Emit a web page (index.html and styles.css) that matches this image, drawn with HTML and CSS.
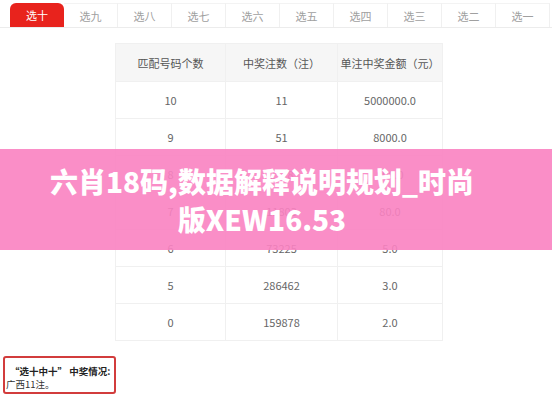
FILE: index.html
```html
<!DOCTYPE html>
<html lang="zh">
<head>
<meta charset="utf-8">
<link rel="stylesheet" href="styles.css">
</head>
<body>
<div class="page">
  <div class="tabs">
    <div class="tab active">选十</div>
    <div class="tab">选九</div>
    <div class="tab">选八</div>
    <div class="tab">选七</div>
    <div class="tab">选六</div>
    <div class="tab">选五</div>
    <div class="tab">选四</div>
    <div class="tab">选三</div>
    <div class="tab">选二</div>
    <div class="tab">选一</div>
  </div>
  <div class="table-wrap">
    <table class="prize">
      <thead>
        <tr><th>匹配号码个数</th><th>中奖注数（注）</th><th>单注中奖金额（元）</th></tr>
      </thead>
      <tbody>
        <tr><td>10</td><td>11</td><td>5000000.0</td></tr>
        <tr><td>9</td><td>51</td><td>8000.0</td></tr>
        <tr><td>8</td><td>1128</td><td>800.0</td></tr>
        <tr><td>7</td><td>11803</td><td>80.0</td></tr>
        <tr><td>6</td><td>73225</td><td>5.0</td></tr>
        <tr><td>5</td><td>286462</td><td>3.0</td></tr>
        <tr><td>0</td><td>159878</td><td>2.0</td></tr>
      </tbody>
    </table>
  </div>
  <div class="note">
    <div class="note-title">“选十中十” 中奖情况:</div>
    <div class="note-body">广西11注。</div>
  </div>
  <div class="banner">
    <h1 class="banner-title">六肖18码,数据解释说明规划_时尚版XEW16.53</h1>
  </div>
</div>
</body>
</html>
```
FILE: styles.css
```css
* { box-sizing: border-box; }
html, body { margin: 0; padding: 0; background: #fff; }
body {
  width: 552px;
  height: 400px;
  overflow: hidden;
  font-family: "Noto Sans CJK SC", "Noto Sans", sans-serif;
}
.page { position: relative; width: 552px; height: 400px; }
.tabs {
  display: flex;
  padding: 3px 0 0 10px;
  height: 28px;
  border-bottom: 1px solid #ececec;
}
.tab {
  width: 54px;
  height: 24px;
  line-height: 24px;
  text-align: center;
  font-size: 11px;
  color: #a0a0a0;
  border-right: 1px solid #f0f0f0;
  border-top: 1px solid #f3f3f3;
}
.tab.active {
  background: #e8231d;
  color: #fff;
  border-radius: 6px 6px 0 0;
  border: none;
}
.table-wrap {
  padding: 15px 0 0 115px;
}
.prize {
  border-collapse: collapse;
  font-size: 11px;
  color: #666;
}
.prize th, .prize td {
  border: 1px solid #f0f0f0;
  text-align: center;
  font-weight: normal;
  padding: 0;
}
.prize th {
  background: #f6f6f6;
  height: 38px;
  color: #555;
}
.prize td { height: 37px; }
.prize th:nth-child(1), .prize td:nth-child(1) { width: 110px; }
.prize th:nth-child(2), .prize td:nth-child(2) { width: 112px; }
.prize th:nth-child(3), .prize td:nth-child(3) { width: 105px; }
.note {
  margin: 15px 0 0 3px;
  width: 113px;
  height: 38px;
  border: 2px solid #d23c3c;
  border-radius: 3px;
  padding: 7px 0 0 1px;
  font-size: 9.5px;
  line-height: 13px;
  color: #333;
  white-space: nowrap;
}
.note-title { font-weight: bold; padding-left: 4px; color: #222; }
.banner {
  position: absolute;
  left: 0;
  top: 149px;
  width: 552px;
  height: 101px;
  background: rgba(249, 130, 193, 0.9);
  display: flex;
  align-items: center;
  justify-content: center;
  padding: 0 74px 0 46px;
}
.banner-title {
  margin: 0;
  color: #fff;
  font-size: 28px;
  line-height: 38px;
  font-weight: 900;
  text-align: center;
  font-family: "Noto Sans CJK SC", "Noto Sans", sans-serif;
}
```
